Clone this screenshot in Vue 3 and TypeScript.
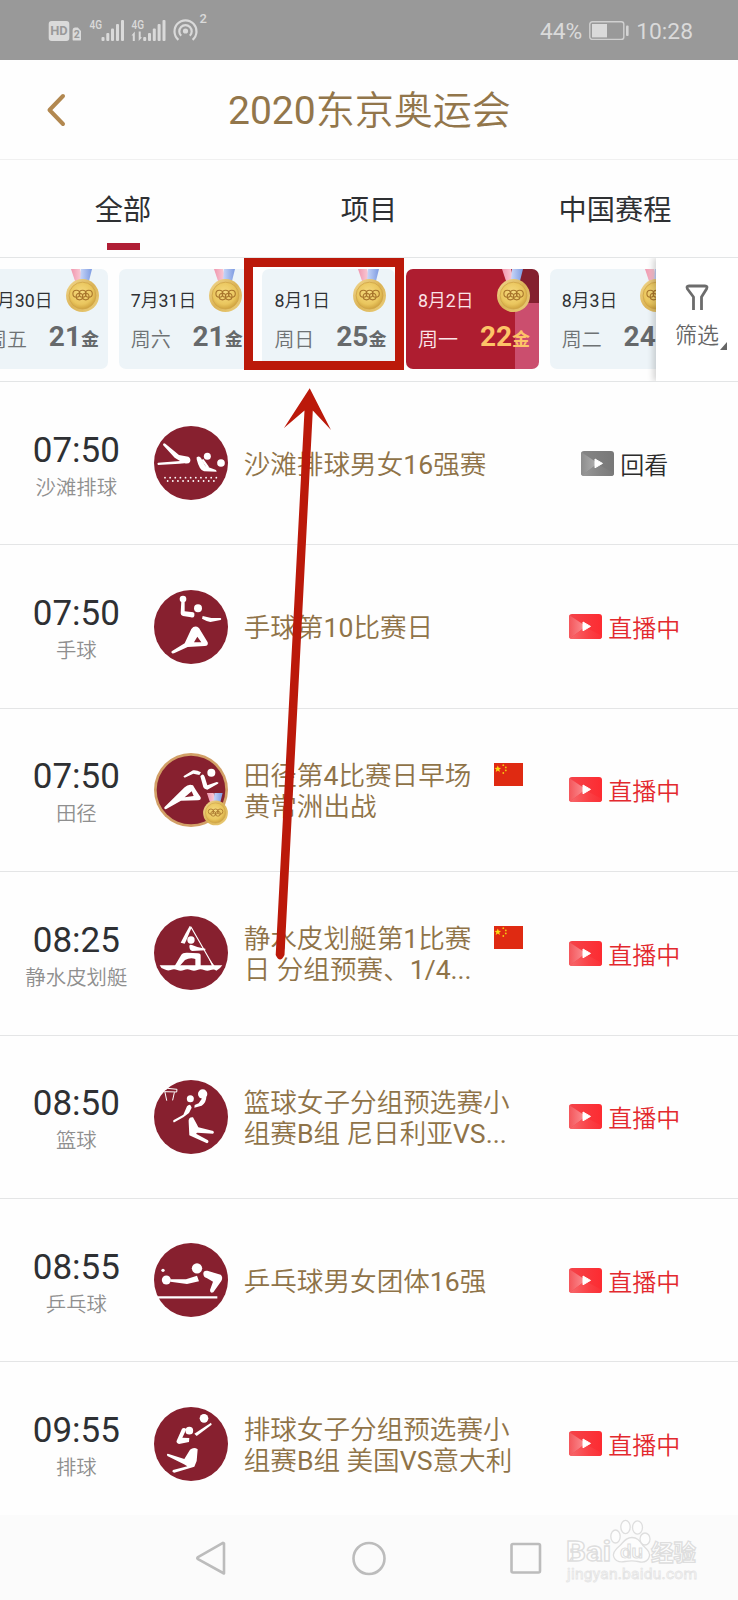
<script setup lang="ts">
interface DayCard {
  date: string
  week: string
  golds: number
  active?: boolean
}

interface Match {
  time: string
  sport: string
  icon: string
  lines: string[]
  replay?: boolean
  flag?: boolean
  final?: boolean
}

interface Run {
  text: string
  latin: boolean
}

const tabs: string[] = ['全部', '项目', '中国赛程']

const days: DayCard[] = [
  { date: '7月30日', week: '周五', golds: 21 },
  { date: '7月31日', week: '周六', golds: 21 },
  { date: '8月1日', week: '周日', golds: 25 },
  { date: '8月2日', week: '周一', golds: 22, active: true },
  { date: '8月3日', week: '周二', golds: 24 },
]

const matches: Match[] = [
  { time: '07:50', sport: '沙滩排球', icon: 'beach', lines: ['沙滩排球男女16强赛'], replay: true },
  { time: '07:50', sport: '手球', icon: 'handball', lines: ['手球第10比赛日'] },
  { time: '07:50', sport: '田径', icon: 'athletics', lines: ['田径第4比赛日早场', '黄常洲出战'], flag: true, final: true },
  { time: '08:25', sport: '静水皮划艇', icon: 'canoe', lines: ['静水皮划艇第1比赛', '日 分组预赛、1/4...'], flag: true },
  { time: '08:50', sport: '篮球', icon: 'basketball', lines: ['篮球女子分组预选赛小', '组赛B组 尼日利亚VS...'] },
  { time: '08:55', sport: '乒乓球', icon: 'tabletennis', lines: ['乒乓球男女团体16强'] },
  { time: '09:55', sport: '排球', icon: 'volleyball', lines: ['排球女子分组预选赛小', '组赛B组 美国VS意大利'] },
]

// Latin and Chinese runs carry different weights, so a line is split where the script changes.
function runs(line: string): Run[] {
  return (line.match(/[\x21-\x7e]+|[^\x21-\x7e]+/g) ?? []).map((text) => ({
    text,
    latin: /^[\x21-\x7e]/.test(text),
  }))
}

const upperDots: number[] = Array.from({ length: 11 }, (_, i) => 33 + i * 15.4)
const lowerDots: number[] = Array.from({ length: 10 }, (_, i) => 41 + i * 15.4)
</script>

<template>
  <div class="screen">
    <svg class="defs" width="0" height="0">
      <defs>
        <radialGradient id="gold" cx=".45" cy=".4" r=".6">
          <stop offset="0" stop-color="#f6db80" />
          <stop offset=".7" stop-color="#eac65e" />
          <stop offset="1" stop-color="#d0a440" />
        </radialGradient>
        <linearGradient id="rim" x1="0" y1="0" x2="1" y2="1">
          <stop offset="0" stop-color="#f3da92" />
          <stop offset=".5" stop-color="#dbb356" />
          <stop offset="1" stop-color="#ecd07c" />
        </linearGradient>
        <linearGradient id="pinkRibbon" x1="0" y1="0" x2="1" y2="0">
          <stop offset="0" stop-color="#f096ae" />
          <stop offset="1" stop-color="#fbd3dc" />
        </linearGradient>
        <linearGradient id="blueRibbon" x1="0" y1="0" x2="1" y2="0">
          <stop offset="0" stop-color="#c9d7f8" />
          <stop offset="1" stop-color="#7d9be2" />
        </linearGradient>
        <linearGradient id="redPlay" x1="0" y1="0" x2="1" y2="0">
          <stop offset="0" stop-color="#f4444a" />
          <stop offset="1" stop-color="#fd2b31" />
        </linearGradient>
        <linearGradient id="redPlayLeft" x1="0" y1="0" x2="1" y2="0">
          <stop offset="0" stop-color="#f4555a" />
          <stop offset="1" stop-color="#fb9498" />
        </linearGradient>
        <linearGradient id="redPlayBottom" x1="0" y1="0" x2="1" y2="0">
          <stop offset="0" stop-color="#f66a6e" />
          <stop offset=".6" stop-color="#fa4045" />
          <stop offset="1" stop-color="#fb3036" />
        </linearGradient>
        <linearGradient id="grayPlay" x1="0" y1="0" x2="1" y2="0">
          <stop offset="0" stop-color="#858585" />
          <stop offset="1" stop-color="#787878" />
        </linearGradient>
        <linearGradient id="grayPlayLeft" x1="0" y1="0" x2="1" y2="0">
          <stop offset="0" stop-color="#8c8c8c" />
          <stop offset="1" stop-color="#b4b4b4" />
        </linearGradient>
        <linearGradient id="grayPlayBottom" x1="0" y1="0" x2="1" y2="0">
          <stop offset="0" stop-color="#9a9a9a" />
          <stop offset=".6" stop-color="#848484" />
          <stop offset="1" stop-color="#7a7a7a" />
        </linearGradient>
        <clipPath id="playClip"><rect width="33" height="25" rx="3" /></clipPath>
        <g id="medal">
          <path d="M5 0h9l3 12h-8z" fill="url(#pinkRibbon)" />
          <path d="M15 0h11l-3 12h-9z" fill="url(#blueRibbon)" />
          <circle cx="16.5" cy="26.6" r="16.5" fill="url(#rim)" />
          <circle cx="16.5" cy="26.6" r="13.4" fill="url(#gold)" stroke="#cfa548" stroke-width=".8" />
          <g fill="none" stroke="#a8752c" stroke-width="1.1">
            <circle cx="10.4" cy="24.8" r="3.5" />
            <circle cx="16.6" cy="24.8" r="3.5" />
            <circle cx="22.8" cy="24.8" r="3.5" />
            <circle cx="13.5" cy="27.600" r="3.3" />
            <circle cx="19.7" cy="27.600" r="3.3" />
          </g>
        </g>
      </defs>
    </svg>

    <header class="status">
      <svg class="status-icons" width="164" height="36" viewBox="0 0 164 36">
        <rect x="0.7" y="9" width="20.6" height="20" rx="3" fill="#dadada" />
        <text x="11" y="23.4" text-anchor="middle" font-size="13" font-weight="700" fill="#999" textLength="17.500" lengthAdjust="spacingAndGlyphs">HD</text>
        <path d="M24.6 18.5q0-3 2.6-3h2.6l3.2 3.6v8.3q0 1.2-1.2 1.2h-6q-1.2 0-1.2-1.2z" fill="#dadada" />
        <text x="28.8" y="26.2" text-anchor="middle" font-size="10.5" font-weight="700" fill="#999">2</text>
        <g fill="#dadada">
          <text x="41.500" y="17" font-size="13" font-weight="500" textLength="12.500" lengthAdjust="spacingAndGlyphs">4G</text>
          <rect x="53.500" y="25" width="3" height="4" rx="1" />
          <rect x="58.300" y="21" width="3" height="8" rx="1" />
          <rect x="63" y="16.500" width="3" height="12.500" rx="1" />
          <rect x="68" y="12" width="3" height="17" rx="1" />
          <rect x="73" y="8" width="3" height="21" rx="1" />
          <text x="83.500" y="17" font-size="13" font-weight="500" textLength="12.500" lengthAdjust="spacingAndGlyphs">4G</text>
          <path d="M83.500 23.500l3.300-4v9.500h-2v-5.500zM94 25.500l-3.300 3.500v-9.500h2v5.500z" />
          <rect x="95.200" y="25" width="3" height="4" rx="1" />
          <rect x="100" y="21" width="3" height="8" rx="1" />
          <rect x="104.800" y="16.500" width="3" height="12.500" rx="1" />
          <rect x="109.600" y="12" width="3" height="17" rx="1" />
          <rect x="114.500" y="8" width="3" height="21" rx="1" />
          <circle cx="137.5" cy="19" r="2.6" />
          <text x="151.6" y="11" font-size="13" font-weight="500">2</text>
        </g>
        <g fill="none" stroke="#dadada" stroke-width="2.200">
          <path d="M133.200 23.800a6.200 6.200 0 1 1 8.600 0" />
          <path d="M130.400 27.800a11 11 0 1 1 14.200 0" />
        </g>
      </svg>
      <div class="status-right">
        <span>44%</span>
        <svg width="40" height="20" viewBox="0 0 40 20">
          <rect x=".8" y=".8" width="34" height="17.6" rx="2.5" fill="none" stroke="#d0d0d0" stroke-width="1.4" />
          <rect x="3" y="3" width="15" height="13.4" fill="#dadada" />
          <rect x="37" y="4.5" width="2.6" height="10.5" rx="1" fill="#d4d4d4" />
        </svg>
        <span>10:28</span>
      </div>
    </header>

    <div class="titlebar">
      <svg class="back" width="20" height="36" viewBox="0 0 20 36">
        <path d="M17 4L3.500 18l13.500 14" fill="none" stroke="#b28850" stroke-width="4" stroke-linecap="round" stroke-linejoin="round" />
      </svg>
      <h1><span v-for="r in runs('2020东京奥运会')" :key="r.text" :class="{ latin: r.latin }">{{ r.text }}</span></h1>
    </div>

    <nav class="tabs">
      <div v-for="(tab, i) in tabs" :key="tab" class="tab" :class="{ current: i === 0 }">{{ tab }}</div>
    </nav>

    <section class="strip">
      <div class="days">
        <div v-for="day in days" :key="day.date" class="day" :class="{ active: day.active }">
          <svg class="day-medal" width="33" height="44" viewBox="0 0 33 44"><use href="#medal" /></svg>
          <div class="date"><span v-for="(r, k) in runs(day.date)" :key="k" :class="{ latin: r.latin }">{{ r.text }}</span></div>
          <div class="day-bottom">
            <span class="week">{{ day.week }}</span>
            <span class="golds">{{ day.golds }}<small>金</small></span>
          </div>
        </div>
      </div>
      <div class="filter">
        <svg width="24" height="28" viewBox="0 0 24 28">
          <path d="M8.5 26V13L2.5 5Q1 2 4 2h16q3 0 1.500 3l-5 8V26" fill="none" stroke="#6c6c6c" stroke-width="2.8" stroke-linejoin="round" />
        </svg>
        <div class="filter-label">
          <span>筛选</span>
          <svg width="7" height="8" viewBox="0 0 7 8"><path d="M7 0v8H0z" fill="#666" /></svg>
        </div>
      </div>
    </section>

    <main class="list">
      <article v-for="(m, i) in matches" :key="i" class="row">
        <div class="when">
          <div class="time">{{ m.time }}</div>
          <div class="sport">{{ m.sport }}</div>
        </div>
        <svg class="badge" width="74" height="74" viewBox="0 0 222 222">
          <circle cx="111" cy="111" r="111" :fill="m.final ? '#d2a067' : '#87202f'" />
          <circle v-if="m.final" cx="111" cy="111" r="103" fill="#87202f" />
          <g fill="#fff" stroke="#fff" stroke-width="0" stroke-linecap="round" stroke-linejoin="round">
            <template v-if="m.icon === 'beach'">
              <path d="M27 57Q27 50 34 53L75 87L103 92Q112 98 108 108Q104 114 92 112L76 113L12 117Q8 113 12 110L78 105L62 95Z" />
              <path d="M128 94Q136 88 141 96L154 120L186 132L188 137L150 136Q136 133 128 100Z" />
              <path d="M147 103l14 20" stroke="#fff" stroke-width="7" />
              <circle cx="160" cy="91" r="10.500" />
              <circle cx="201" cy="111" r="11.500" />
              <circle v-for="x in upperDots" :key="'u' + x" :cx="x" cy="155" r="2.700" />
              <circle v-for="x in lowerDots" :key="'l' + x" :cx="x" cy="165" r="2.700" />
            </template>
            <template v-else-if="m.icon === 'handball'">
              <circle cx="87" cy="27" r="10" />
              <path d="M82 32L92 32L92 64L118 67Q123 69 121 78Q119 84 111 82L87 78Q80 76 80 70Z" />
              <circle cx="132" cy="55" r="12" />
              <path d="M146 78L172 84L200 84Q204 87 200 90L169 96Q156 93 144 86Z" />
              <path fill-rule="evenodd" d="M53 184L92 160L112 117Q122 104 135 114L161 157Q164 168 152 168L101 171L60 190Q50 192 53 184ZM130 140L120 157L142 157Z" />
            </template>
            <template v-else-if="m.icon === 'athletics'">
              <circle cx="172" cy="59" r="12" />
              <path d="M88 70L117 52Q127 50 141 58L136 66L118 62L92 74Z" />
              <path d="M139 70Q147 59 152 71L160 97L188 87Q196 87 192 92L160 110Q150 109 148 103Z" />
              <path fill-rule="evenodd" d="M31 163L92 103Q104 91 117 97Q124 110 140 133Q142 142 132 142L81 143L37 168Q29 170 31 163ZM113 115L92 133L119 129Z" />
            </template>
            <template v-else-if="m.icon === 'canoe'">
              <path d="M109 31L112 37L96 75L92 83L80 80L94 53L107 30Z" />
              <path d="M111 33L178 150" stroke-width="3.500" />
              <path d="M165 128L182 150H174Z" />
              <circle cx="111" cy="72" r="11" />
              <path d="M106 90Q107 84 114 87L130 93L154 98V103L115 105Q106 103 106 90Z" />
              <path d="M62 150L82 116Q86 109 101 110L132 112Q141 112 140 122V150H124V129Q108 124 93 132L77 150Z" />
              <path d="M17 148H205Q199 158 187 164Q180 158 170 162Q160 167 150 162Q140 157 130 162Q120 167 110 162Q100 157 90 162Q80 167 70 162Q60 157 50 162Q40 165 31 160Q20 157 17 148Z" />
            </template>
            <template v-else-if="m.icon === 'basketball'">
              <path d="M26 32l15-7 28 3-1 8-36-1zM33 37l5 24M61 38l-5 22" fill="none" stroke-width="3" />
              <circle cx="146" cy="42" r="14" />
              <circle cx="109" cy="56" r="10.500" />
              <path d="M147 44L157 50Q157 67 143 77L121 83L122 75L134 70L143 57Z" />
              <path d="M99 79Q109 68 113 83L105 99L88 112L61 127Q56 128 58 121L88 104Z" />
              <path d="M104 126Q102 111 117 112L128 132L133 142L178 153Q182 159 177 161L130 158L126 161L162 181Q166 187 159 190L119 172L106 166Z" />
            </template>
            <template v-else-if="m.icon === 'tabletennis'">
              <circle cx="27" cy="82" r="5" />
              <circle cx="37" cy="111" r="13.500" />
              <circle cx="129" cy="76" r="15.500" />
              <path d="M49 109H96L129 98L135 115L99 123L49 116Z" />
              <path d="M148 93Q147 82 160 83L200 95Q208 102 202 114L178 148Q168 153 168 141L177 116L158 105Q149 103 148 93Z" />
              <path d="M12 163H190" stroke-width="7" stroke-linecap="butt" />
            </template>
            <template v-else>
              <circle cx="150" cy="34" r="13" />
              <circle cx="106" cy="71" r="11.500" />
              <path d="M171 47L173 53L128 87L121 80Z" />
              <path d="M84 65Q91 60 97 67L85 92L106 93L105 105L75 111Q64 107 69 99Z" />
              <path d="M108 128Q120 118 131 127L128 162L121 179L61 197Q52 196 57 189L100 178L90 172L40 147Q36 139 44 141L91 156Z" />
            </template>
          </g>
        </svg>
        <svg v-if="m.final" class="badge-medal" width="25" height="33" viewBox="0 0 33 44"><use href="#medal" /></svg>
        <div class="name">
          <div class="lines">
            <div v-for="line in m.lines" :key="line"><span v-for="(r, k) in runs(line)" :key="k" :class="{ latin: r.latin }">{{ r.text }}</span></div>
          </div>
          <svg v-if="m.flag" class="flag" width="29" height="23" viewBox="0 0 29 23">
            <rect width="29" height="23" fill="#df2a12" />
            <path d="M3.800 2.500l.9 2.300 2.400.1-1.900 1.600.7 2.400-2.100-1.400-2.100 1.400.7-2.400L.5 4.900l2.400-.1z" fill="#fbd813" />
            <g fill="#f5c613">
              <circle cx="9.300" cy="2.200" r=".9" />
              <circle cx="11.800" cy="4.400" r=".9" />
              <circle cx="11.800" cy="7.400" r=".9" />
              <circle cx="9.300" cy="10" r=".9" />
            </g>
          </svg>
        </div>
        <div class="state" :class="{ replay: m.replay }">
          <svg width="33" height="25" viewBox="0 0 33 25">
            <g clip-path="url(#playClip)">
              <rect width="33" height="25" :fill="m.replay ? 'url(#grayPlay)' : 'url(#redPlay)'" />
              <path d="M0 1L17 12.300L1 24.500H0z" :fill="m.replay ? 'url(#grayPlayLeft)' : 'url(#redPlayLeft)'" />
              <path d="M1 24.500L16 13L33 22v3H0z" :fill="m.replay ? 'url(#grayPlayBottom)' : 'url(#redPlayBottom)'" />
            </g>
            <path d="M14 8l7.500 4.400L14 16.800z" fill="#fff" stroke="#fff" stroke-linejoin="round" />
          </svg>
          <span>{{ m.replay ? '回看' : '直播中' }}</span>
        </div>
      </article>
    </main>

    <footer class="navbar">
      <svg class="nav-icons" width="350" height="40" viewBox="0 0 350 40">
        <g fill="none" stroke="#bcbcbc" stroke-width="2.600" stroke-linejoin="round">
          <path d="M34 5.300V35.500L8 21.200Q6.500 20.200 8 19.200L33 4.800z" />
          <circle cx="179" cy="20.500" r="15.500" />
          <rect x="321.500" y="6" width="28.500" height="28.500" rx="1.500" />
        </g>
      </svg>
      <svg class="watermark" width="140" height="66" viewBox="0 0 140 66">
        <g fill="#fdfdfd" stroke="#dedede" stroke-width="1.300">
          <text x="1" y="41.500" font-size="28" font-weight="700" textLength="45" lengthAdjust="spacingAndGlyphs">Bai</text>
          <path d="M67 18.500c6 0 8 4 11 8 4 4 8 7 6 12s-7 5-11 4-8-1-13 0-9 0-11-4 1-8 6-12c4-4 6-8 12-8z" />
          <ellipse cx="50.500" cy="17.500" rx="4.700" ry="6.500" />
          <ellipse cx="60.500" cy="8" rx="4.700" ry="6.600" />
          <ellipse cx="72.500" cy="8.500" rx="5" ry="6.600" />
          <ellipse cx="80" cy="20" rx="5" ry="6" />
          <text x="55" y="39" font-size="19" font-weight="500" stroke-width="1" textLength="23" lengthAdjust="spacingAndGlyphs">du</text>
          <text x="86" y="41.500" font-size="23" font-weight="700" textLength="45" lengthAdjust="spacingAndGlyphs">经验</text>
        </g>
        <text x="2" y="60" font-size="15.500" fill="#fdfdfd" stroke="#e4e4e4" stroke-width=".8" textLength="130">jingyan.baidu.com</text>
      </svg>
    </footer>

    <div class="marker"></div>
    <svg class="arrow" width="60" height="580" viewBox="0 0 60 580">
      <path d="M39.700 3.300L61 45 42.800 25.500 14.500 570Q10 579 5.700 570L34.500 25.500 14 43z" fill="#bb190a" />
    </svg>
  </div>
</template>

<style>
html,
body {
  margin: 0;
  background: #fff;
}
</style>

<style scoped>
.screen {
  position: relative;
  display: flex;
  flex-direction: column;
  width: 738px;
  height: 1600px;
  overflow: hidden;
  background: #fefefe;
  color: #2e3033;
  font-family: Roboto, 'Noto Sans CJK SC', sans-serif;
}

.defs {
  position: absolute;
}

.latin {
  font-weight: 400;
}

.status {
  flex: none;
  display: flex;
  justify-content: space-between;
  height: 60px;
  background: #999;
}

.status-icons {
  margin: 12px 0 0 48px;
  overflow: visible;
}

.status-right {
  display: flex;
  align-items: center;
  gap: 7px;
  height: 62px;
  padding-right: 45px;
  font-size: 22.800px;
  color: #dadada;
}

.titlebar {
  flex: none;
  position: relative;
  box-sizing: border-box;
  display: flex;
  align-items: center;
  height: 100px;
  border-bottom: 1px solid #f0f0f0;
}

.back {
  margin-left: 46px;
}

h1 {
  margin: 3px 0 0 162px;
  font-size: 39px;
  font-weight: 350;
  line-height: 60px;
  color: #92764b;
}

.tabs {
  flex: none;
  box-sizing: border-box;
  display: grid;
  grid-template-columns: repeat(3, 246px);
  height: 98px;
  border-bottom: 1px solid #e3e5e6;
}

.tab {
  display: flex;
  flex-direction: column;
  align-items: center;
  justify-content: space-between;
  box-sizing: border-box;
  height: 90px;
  padding-top: 9px;
  font-size: 28.200px;
  line-height: 83px;
}

.current::after {
  content: '';
  width: 33px;
  height: 7px;
  flex: none;
  margin-top: -9px;
  background: #b01e35;
}

.strip {
  flex: none;
  box-sizing: border-box;
  display: flex;
  height: 124px;
  border-bottom: 1.500px solid #e3e5e6;
}

.days {
  flex: 1;
  min-width: 0;
  display: flex;
  gap: 10.700px;
  overflow: hidden;
}

.day {
  position: relative;
  flex: none;
  box-sizing: border-box;
  width: 133px;
  height: 100px;
  margin-top: 11px;
  padding: 17px 9px 0 12px;
  border-radius: 7px;
  background: #edf4f8;
}

.day:first-child {
  margin-left: -25px;
}

.day.active {
  background:
    linear-gradient(#84202f, #84202f) 109px 0 / 24px 34px no-repeat,
    linear-gradient(#cb4e6e, #cb4e6e) 109px 34px / 24px 66px no-repeat,
    #ae1d30;
}

.day-medal {
  position: absolute;
  left: 90.500px;
  top: 0;
}

.date {
  font-size: 17.800px;
  font-weight: 350;
  line-height: 30px;
}

.day-bottom {
  display: flex;
  justify-content: space-between;
  align-items: center;
  height: 40px;
  margin-top: 2px;
}

.week {
  font-size: 20px;
  font-weight: 350;
  color: #6e7274;
}

.golds {
  font-size: 28px;
  font-weight: 700;
  line-height: 40px;
  color: #66696b;
}

.golds small {
  font-size: 18px;
}

.active .date,
.active .week {
  color: #fbe5e8;
}

.active .golds {
  color: #fdc468;
}

.filter {
  position: relative;
  box-sizing: border-box;
  display: flex;
  flex-direction: column;
  align-items: center;
  width: 82px;
  padding-top: 26px;
  background: #fff;
  box-shadow: -3px 0 6px rgba(0, 0, 0, 0.16);
  clip-path: inset(0 0 0 -12px);
}

.filter-label {
  display: flex;
  align-items: flex-end;
  gap: 1px;
  margin-left: 8px;
  margin-top: 4px;
  font-size: 22px;
  font-weight: 350;
  line-height: 40px;
  color: #666;
}

.filter-label svg {
  margin-bottom: 6px;
}

.list {
  flex: 1;
  min-height: 0;
  overflow: hidden;
}

.row {
  position: relative;
  box-sizing: border-box;
  display: grid;
  grid-template-columns: 153.700px 74px 284px 1fr;
  align-items: center;
  height: 163.400px;
  border-bottom: 1.500px solid #e4e5e6;
}

.when {
  display: flex;
  flex-direction: column;
  align-items: center;
  padding: 5px 1px 0 0;
}

.time {
  font-size: 35px;
  line-height: 44px;
}

.sport {
  margin-top: 1px;
  font-size: 20.400px;
  font-weight: 350;
  line-height: 29px;
  color: #8f8f8f;
}

.badge {
  display: block;
}

.badge-medal {
  position: absolute;
  left: 203px;
  top: 84px;
}

.name {
  display: flex;
  justify-content: space-between;
  padding-left: 16px;
}

.lines {
  font-size: 26.600px;
  font-weight: 350;
  line-height: 31px;
  white-space: nowrap;
  color: #8f7348;
  transform: translateY(1px);
}

.flag {
  flex: none;
  margin: 4px -11px 0 0;
}

.state {
  display: flex;
  align-items: center;
  justify-content: center;
  gap: 6px;
  width: 226px;
  font-size: 24px;
  font-weight: 350;
  color: #e3292e;
}

.state.replay {
  color: #2c2c2c;
}

.navbar {
  flex: none;
  display: flex;
  height: 85px;
  background: #fbfbfb;
}

.nav-icons {
  margin: 23px 0 0 190px;
  overflow: visible;
}

.watermark {
  margin: 4px 0 0 25px;
  overflow: visible;
}

.marker {
  position: absolute;
  left: 244px;
  top: 258px;
  box-sizing: border-box;
  width: 160px;
  height: 112px;
  border: 9px solid #bb190a;
}

.arrow {
  position: absolute;
  left: 270px;
  top: 385px;
  overflow: visible;
}
</style>
